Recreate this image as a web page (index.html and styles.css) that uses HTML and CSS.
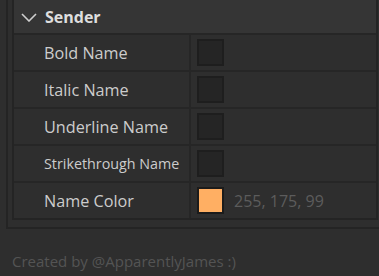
FILE: index.html
```html
<!DOCTYPE html>
<html>
<head>
<meta charset="utf-8">
<link rel="stylesheet" href="styles.css">
</head>
<body>
<div class="page">
  <div class="outer">
    <div class="inner">
      <div class="header">
        <svg class="chev" width="16" height="9" viewBox="0 0 16 9"><path d="M1 1 L8 8 L15 1" fill="none" stroke="#cfcfcf" stroke-width="1.6"/></svg>
        <span class="title">Sender</span>
      </div>
      <div class="row">
        <div class="label">Bold Name</div>
        <div class="value"><span class="check"></span></div>
      </div>
      <div class="row">
        <div class="label">Italic Name</div>
        <div class="value"><span class="check"></span></div>
      </div>
      <div class="row">
        <div class="label">Underline Name</div>
        <div class="value"><span class="check"></span></div>
      </div>
      <div class="row">
        <div class="label small">Strikethrough Name</div>
        <div class="value"><span class="check"></span></div>
      </div>
      <div class="row last">
        <div class="label">Name Color</div>
        <div class="value"><span class="swatch"><span class="fill" style="background:#ffaf63"></span></span><span class="rgb">255, 175, 99</span></div>
      </div>
    </div>
  </div>
  <div class="footer">Created by @ApparentlyJames :)</div>
</div>
</body>
</html>
```
FILE: styles.css
```css
html, body {
  margin: 0;
  padding: 0;
  background: #2e2e2e;
}
body {
  width: 379px;
  height: 276px;
  overflow: hidden;
  font-family: "Open Sans", "Noto Sans", sans-serif;
}
.page {
  display: flex;
  flex-direction: column;
}
.outer {
  margin-left: 6px;
  width: 366px;
  border: 2px solid #242424;
  border-top: none;
  padding: 0 5px 7px 4px;
}
.inner {
  border: 2px solid #242424;
  border-top: none;
  display: flex;
  flex-direction: column;
}
.header {
  height: 33px;
  background: #353535;
  border-bottom: 2px solid #262626;
  display: flex;
  align-items: center;
  padding-left: 7px;
}
.chev {
  margin-right: 8px;
  margin-top: 1px;
}
.title {
  font-weight: bold;
  font-size: 16px;
  color: #dedede;
}
.row {
  height: 35px;
  display: flex;
  border-bottom: 2px solid #262626;
}
.row.last {
  border-bottom: none;
}
.label {
  width: 177px;
  border-right: 2px solid #262626;
  display: flex;
  align-items: center;
  padding-left: 30px;
  box-sizing: border-box;
  color: #cccccc;
  font-size: 16.2px;
}
.label.small {
  font-size: 14.3px;
}
.value {
  flex: 1;
  display: flex;
  align-items: center;
  padding-left: 6px;
}
.check {
  width: 23px;
  height: 23px;
  border: 2px solid #1e1e1e;
  background: #252525;
}
.swatch {
  width: 23px;
  height: 23px;
  border: 2px solid #1b1b1b;
  display: flex;
}
.fill {
  flex: 1;
}
.rgb {
  margin-left: 10px;
  color: #5c5c5c;
  font-size: 16px;
}
.footer {
  padding: 22px 0 0 12px;
  color: #545454;
  font-size: 15px;
}
```
